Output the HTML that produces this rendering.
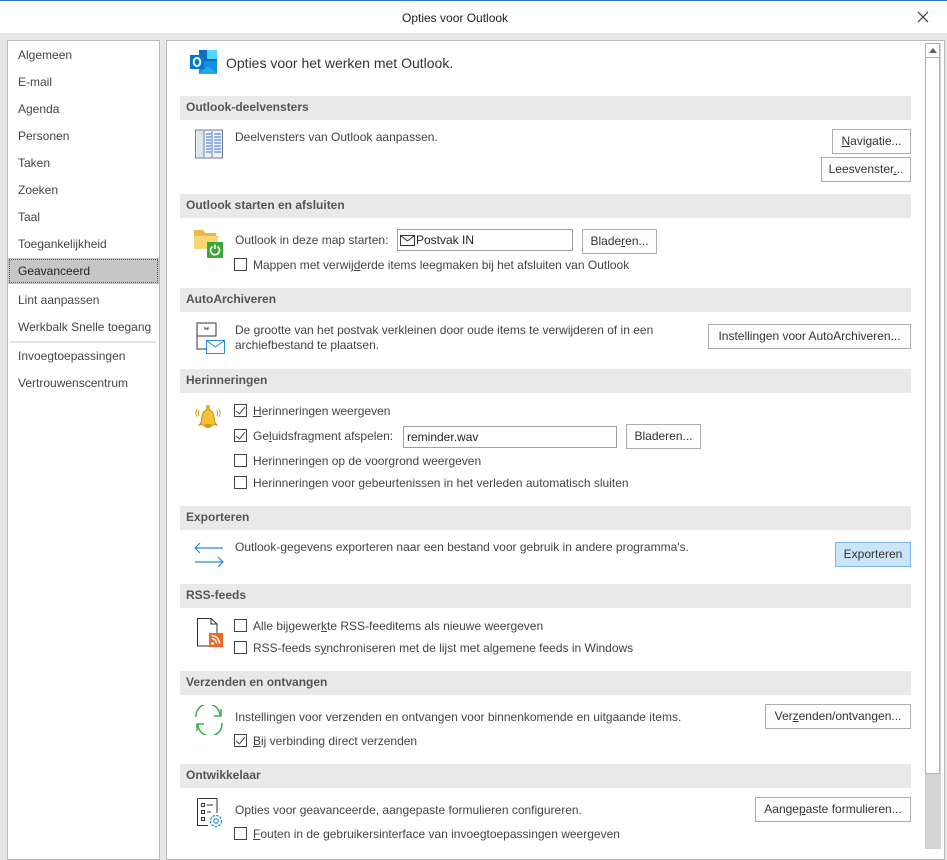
<!DOCTYPE html>
<html><head><meta charset="utf-8"><style>
*{margin:0;padding:0;box-sizing:border-box}
body{width:947px;height:849px;overflow:hidden;background:#e6e6e6;font-family:"Segoe UI","Liberation Sans",sans-serif;font-size:12px;color:#444;position:relative}
.a{position:absolute;line-height:16px;white-space:nowrap}
.top{position:absolute;left:0;top:0;width:947px;height:33px;background:#fff}
.nav{position:absolute;left:7px;top:40px;width:153px;height:820px;background:#fff;border:1px solid #b9b9b9}
.main{position:absolute;left:166px;top:40px;width:779px;height:820px;background:#fff;border:1px solid #b9b9b9}
.h{position:absolute;left:180px;width:731px;height:24px;background:#e9e9e9;font-weight:bold;color:#555;padding:3px 0 0 6px;line-height:16px}
.btn{position:absolute;height:25px;border:1px solid #adadad;background:#fdfdfd;text-align:center;line-height:23px;color:#333}
.cb{position:absolute;width:13px;height:13px;border:1px solid #444;background:#fff}
.cb.c::after{content:"";position:absolute;left:3px;top:0px;width:4px;height:8px;border:solid #444;border-width:0 1.5px 1.5px 0;transform:rotate(40deg)}
.inp{position:absolute;height:22px;border:1px solid #a0a0a0;background:#fff;color:#222;line-height:20px;padding-left:3px}
u{text-decoration:underline}
</style></head><body>
<div class="top"></div>
<div style="position:absolute;left:0;top:0;width:947px;height:3px;border-top:1px solid #2b7cd3"></div>
<div class="a" style="left:402px;top:10px;color:#222">Opties voor Outlook</div>
<svg class="a" style="left:917px;top:11px" width="12" height="12"><path d="M1 1L11 11M11 1L1 11" stroke="#333" stroke-width="1.2"/></svg>

<div class="nav"></div>
<div class="a" style="left:18px;top:47px">Algemeen</div>
<div class="a" style="left:18px;top:74px">E-mail</div>
<div class="a" style="left:18px;top:101px">Agenda</div>
<div class="a" style="left:18px;top:128px">Personen</div>
<div class="a" style="left:18px;top:155px">Taken</div>
<div class="a" style="left:18px;top:182px">Zoeken</div>
<div class="a" style="left:18px;top:209px">Taal</div>
<div class="a" style="left:18px;top:236px">Toegankelijkheid</div>
<div style="position:absolute;left:8px;top:258px;width:151px;height:26px;background:#c6c6c6"></div>
<div style="position:absolute;left:9px;top:259px;width:149px;height:24px;border:1px dotted #555"></div>
<div class="a" style="left:18px;top:263px;color:#222">Geavanceerd</div>
<div class="a" style="left:18px;top:292px">Lint aanpassen</div>
<div class="a" style="left:18px;top:319px">Werkbalk Snelle toegang</div>
<div style="position:absolute;left:10px;top:341px;width:146px;height:2px;background:#e2e2e2"></div>
<div class="a" style="left:18px;top:348px">Invoegtoepassingen</div>
<div class="a" style="left:18px;top:375px">Vertrouwenscentrum</div>

<div class="main"></div>
<!-- scrollbar -->
<div style="position:absolute;left:925px;top:43px;width:16px;height:806px;background:#d4d4d4;border-left:1px solid #ccc"></div>
<div style="position:absolute;left:925px;top:43px;width:15px;height:731px;background:#fff;border:1px solid #b0b0b0"></div>
<svg class="a" style="left:929px;top:48px" width="8" height="5"><path d="M0 5L4 0L8 5Z" fill="#606060"/></svg>
<div style="position:absolute;left:926px;top:57px;width:14px;height:1px;background:#b0b0b0"></div>

<svg class="a" style="left:190px;top:50px" width="28" height="25"><rect x="9" y="0" width="18" height="24" fill="#0f6cbd"/><rect x="17" y="0" width="10" height="9" fill="#50d9ff"/><path d="M9 11L27 11L27 24L9 24Z" fill="#1490df"/><path d="M9 24L18 16L27 24" fill="#28a8ea"/><rect x="0" y="5" width="14" height="14" fill="#0078d4"/><ellipse cx="7" cy="12" rx="3.3" ry="4" fill="none" stroke="#fff" stroke-width="2"/></svg>
<div class="a" style="left:226px;top:55px;font-size:14px;color:#333">Opties voor het werken met Outlook.</div>

<div class="h" style="top:96px">Outlook-deelvensters</div>
<svg class="a" style="left:195px;top:129px" width="29" height="31"><rect x="0.5" y="1" width="27" height="28" fill="#eef3fa" stroke="#6c7a8c"/><rect x="2" y="2" width="6" height="26" fill="#dfe5ee"/><path d="M9 2V28M17 2V28" stroke="#6c7a8c"/><g stroke="#2d6fd6"><path d="M11 5H16M11 8H16M11 11H16M11 14H16M11 17H16M11 20H16M11 23H16M19 5H26M19 8H26M19 11H26M19 14H26M19 17H26M19 20H26M19 23H26"/></g></svg>
<div class="a" style="left:235px;top:129px">Deelvensters van Outlook aanpassen.</div>
<div class="btn" style="left:832px;top:129px;width:79px"><u>N</u>avigatie...</div>
<div class="btn" style="left:821px;top:157px;width:90px">Leesvenster<u>.</u>..</div>

<div class="h" style="top:194px">Outlook starten en afsluiten</div>
<svg class="a" style="left:193px;top:227px" width="32" height="32"><path d="M1 3H10L12 6H23V20H1Z" fill="#e8b84a"/><path d="M1 9H26L22 22H1Z" fill="#f8d675"/><rect x="14" y="15" width="16" height="16" fill="#3ca83c"/><path d="M19.5 19.5A4.5 4.5 0 1 0 24.5 19.5M22 17.5V22" stroke="#fff" stroke-width="1.6" fill="none"/></svg>
<div class="a" style="left:235px;top:232px">Outlook in deze map starten:</div>
<div class="inp" style="left:397px;top:229px;width:176px"><svg style="position:absolute;left:2px;top:5px" width="15" height="11"><rect x="0.5" y="0.5" width="14" height="10" fill="#fff" stroke="#333"/><path d="M0.5 0.5L7.5 6L14.5 0.5" fill="none" stroke="#333"/></svg><span style="padding-left:15px">Postvak IN</span></div>
<div class="btn" style="left:582px;top:229px;width:75px">Blade<u>r</u>en...</div>
<div class="cb" style="left:234px;top:258px"></div>
<div class="a" style="left:253px;top:257px">Mappen met verwij<u>d</u>erde items leegmaken bij het afsluiten van Outlook</div>

<div class="h" style="top:288px">AutoArchiveren</div>
<svg class="a" style="left:196px;top:322px" width="32" height="33"><path d="M1 1H20V14H1ZM1 14V27H10" fill="none" stroke="#333"/><path d="M9 5V7H12V5" fill="none" stroke="#333"/><rect x="10.5" y="18.5" width="18" height="13" fill="#fff" stroke="#2a8ad4"/><path d="M10.5 18.5L19.5 25L28.5 18.5" fill="none" stroke="#2a8ad4"/></svg>
<div class="a" style="left:235px;top:322px">De grootte van het postvak verkleinen door oude items te verwijderen of in een</div>
<div class="a" style="left:235px;top:337px">archiefbestand te plaatsen.</div>
<div class="btn" style="left:708px;top:324px;width:203px">Instellingen voor AutoArchiveren...</div>

<div class="h" style="top:369px">Herinneringen</div>
<svg class="a" style="left:194px;top:403px" width="28" height="28"><path d="M7 20C8 16 7 8 14 6C21 8 20 16 21 20L23 22H5Z" fill="#f4c232" stroke="#c88e10"/><circle cx="14" cy="4" r="2" fill="#e3aa20"/><ellipse cx="14" cy="23" rx="4" ry="2" fill="#d79a16"/><path d="M3 6Q1 10 3 14M25 6Q27 10 25 14M5 7Q4 10 5 13M23 7Q24 10 23 13" stroke="#d9a020" fill="none"/></svg>
<div class="cb c" style="left:234px;top:404px"></div>
<div class="a" style="left:253px;top:403px"><u>H</u>erinneringen weergeven</div>
<div class="cb c" style="left:234px;top:429px"></div>
<div class="a" style="left:253px;top:428px">Ge<u>l</u>uidsfragment afspelen:</div>
<div class="inp" style="left:403px;top:426px;width:214px">reminder.wav</div>
<div class="btn" style="left:626px;top:424px;width:75px">Bladeren...</div>
<div class="cb" style="left:234px;top:454px"></div>
<div class="a" style="left:253px;top:453px">Herinneringen op de voorgrond weergeven</div>
<div class="cb" style="left:234px;top:476px"></div>
<div class="a" style="left:253px;top:475px">Herinneringen voor gebeurtenissen in het verleden automatisch sluiten</div>

<div class="h" style="top:506px">Exporteren</div>
<svg class="a" style="left:193px;top:541px" width="32" height="28"><path d="M30 7H2M7 2L2 7L7 12M2 21H30M25 16L30 21L25 26" fill="none" stroke="#2a8ad4" stroke-width="1.2"/></svg>
<div class="a" style="left:235px;top:539px">Outlook-gegevens exporteren naar een bestand voor gebruik in andere programma's.</div>
<div class="btn" style="left:835px;top:542px;width:76px;background:#cce4f7;border-color:#7eb4ea">Exporteren</div>

<div class="h" style="top:584px">RSS-feeds</div>
<svg class="a" style="left:197px;top:618px" width="30" height="32"><path d="M0.5 0.5H14L20 6V28H0.5Z" fill="#fff" stroke="#333"/><path d="M14 0.5V6H20" fill="none" stroke="#333"/><rect x="12" y="15" width="14" height="14" fill="#f26522"/><circle cx="15.5" cy="25.5" r="1.4" fill="#fff"/><path d="M14.5 20.5A5 5 0 0 1 19.5 25.5M14.5 17.5A8 8 0 0 1 22.5 25.5" stroke="#fff" stroke-width="1.5" fill="none"/></svg>
<div class="cb" style="left:234px;top:619px"></div>
<div class="a" style="left:253px;top:618px">Alle bijgewer<u>k</u>te RSS-feeditems als nieuwe weergeven</div>
<div class="cb" style="left:234px;top:641px"></div>
<div class="a" style="left:253px;top:640px">RSS-feeds s<u>y</u>nchroniseren met de lijst met algemene feeds in Windows</div>

<div class="h" style="top:671px">Verzenden en ontvangen</div>
<svg class="a" style="left:193px;top:705px" width="32" height="30"><path d="M3 12A12 12 0 0 1 27 10M29 18A12 12 0 0 1 5 20" fill="none" stroke="#3aae4e" stroke-width="1.5"/><path d="M28 4V11H21M4 26V19H11" fill="none" stroke="#3aae4e" stroke-width="1.5"/></svg>
<div class="a" style="left:235px;top:709px">Instellingen voor verzenden en ontvangen voor binnenkomende en uitgaande items.</div>
<div class="btn" style="left:765px;top:704px;width:146px">Ver<u>z</u>enden/ontvangen...</div>
<div class="cb c" style="left:234px;top:734px"></div>
<div class="a" style="left:253px;top:733px"><u>B</u>ij verbinding direct verzenden</div>

<div class="h" style="top:764px">Ontwikkelaar</div>
<svg class="a" style="left:197px;top:798px" width="30" height="32"><path d="M0.5 0.5H20V15M0.5 0.5V27.5H11" fill="none" stroke="#333"/><rect x="4.5" y="5.5" width="3" height="3" fill="none" stroke="#333"/><rect x="4.5" y="12.5" width="3" height="3" fill="none" stroke="#333"/><rect x="4.5" y="19.5" width="3" height="3" fill="none" stroke="#333"/><path d="M10 7H16M10 14H14" stroke="#333"/><circle cx="19" cy="23" r="5.5" fill="#fff" stroke="#2a8ad4" stroke-width="1.3" stroke-dasharray="2.5 1.2"/><circle cx="19" cy="23" r="2.2" fill="none" stroke="#2a8ad4" stroke-width="1.2"/></svg>
<div class="a" style="left:235px;top:802px">Opties voor geavanceerde, aangepaste formulieren configureren.</div>
<div class="btn" style="left:755px;top:797px;width:156px">Aange<u>p</u>aste formulieren...</div>
<div class="cb" style="left:234px;top:827px"></div>
<div class="a" style="left:253px;top:826px"><u>F</u>outen in de gebruikersinterface van invoegtoepassingen weergeven</div>
</body></html>
